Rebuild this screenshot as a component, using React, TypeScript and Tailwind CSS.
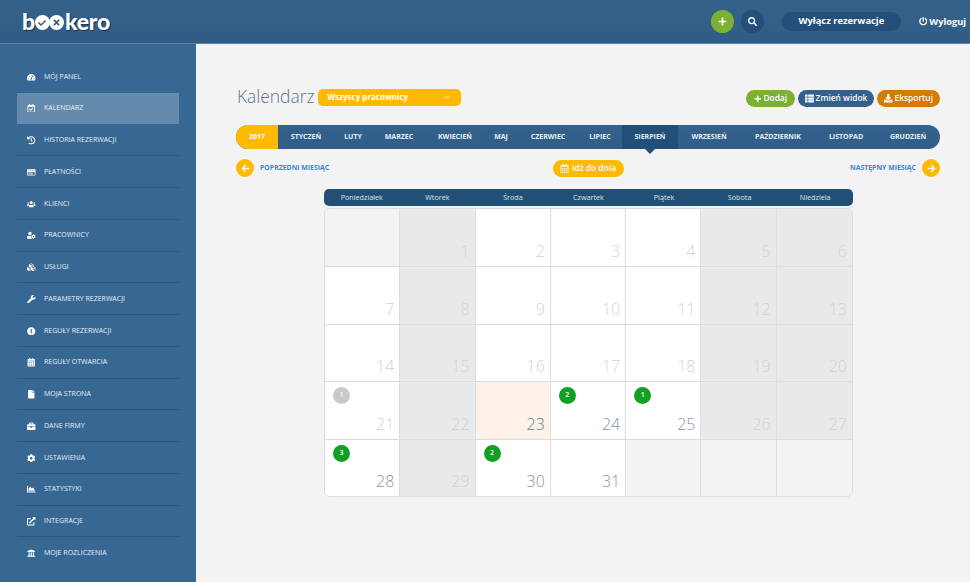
import React from "react";
import {
  FaTachometerAlt, FaRegCalendarCheck, FaHistory, FaRegCreditCard, FaUsers, FaUserCog, FaCubes, FaWrench,
  FaExclamationCircle, FaCalendarAlt, FaFile, FaBriefcase, FaCog, FaChartArea, FaExternalLinkAlt, FaUniversity,
  FaPlus, FaSearch, FaPowerOff, FaThList, FaDownload, FaArrowLeft, FaArrowRight, FaRegCalendarAlt, FaCheck, FaTimes,
} from "react-icons/fa";
import { FiChevronDown } from "react-icons/fi";

const nav: [string, React.ComponentType<{ className?: string }>][] = [
  ["MÓJ PANEL", FaTachometerAlt],
  ["KALENDARZ", FaRegCalendarCheck],
  ["HISTORIA REZERWACJI", FaHistory],
  ["PŁATNOŚCI", FaRegCreditCard],
  ["KLIENCI", FaUsers],
  ["PRACOWNICY", FaUserCog],
  ["USŁUGI", FaCubes],
  ["PARAMETRY REZERWACJI", FaWrench],
  ["REGUŁY REZERWACJI", FaExclamationCircle],
  ["REGUŁY OTWARCIA", FaCalendarAlt],
  ["MOJA STRONA", FaFile],
  ["DANE FIRMY", FaBriefcase],
  ["USTAWIENIA", FaCog],
  ["STATYSTYKI", FaChartArea],
  ["INTEGRACJE", FaExternalLinkAlt],
  ["MOJE ROZLICZENIA", FaUniversity],
];

const months: [string, string][] = [
  ["STYCZEŃ", "w-[56px]"],
  ["LUTY", "w-[38px]"],
  ["MARZEC", "w-[54px]"],
  ["KWIECIEŃ", "w-[58px]"],
  ["MAJ", "w-[34px]"],
  ["CZERWIEC", "w-[60px]"],
  ["LIPIEC", "w-[44px]"],
  ["SIERPIEŃ", "w-[56px]"],
  ["WRZESIEŃ", "w-[62px]"],
  ["PAŹDZIERNIK", "w-[76px]"],
  ["LISTOPAD", "w-[60px]"],
  ["GRUDZIEŃ", "w-[64px]"],
];
const days = ["Poniedziałek", "Wtorek", "Środa", "Czwartek", "Piątek", "Sobota", "Niedziela"];

type Cell = { n?: number; kind: "empty" | "off" | "open" | "today"; badge?: number; grey?: boolean; strong?: boolean };

const cells: Cell[] = [
  { kind: "empty" }, { n: 1, kind: "off" }, { n: 2, kind: "open" }, { n: 3, kind: "open" }, { n: 4, kind: "open" }, { n: 5, kind: "off" }, { n: 6, kind: "off" },
  { n: 7, kind: "open" }, { n: 8, kind: "off" }, { n: 9, kind: "open" }, { n: 10, kind: "open" }, { n: 11, kind: "open" }, { n: 12, kind: "off" }, { n: 13, kind: "off" },
  { n: 14, kind: "open" }, { n: 15, kind: "off" }, { n: 16, kind: "open" }, { n: 17, kind: "open" }, { n: 18, kind: "open" }, { n: 19, kind: "off" }, { n: 20, kind: "off" },
  { n: 21, kind: "open", badge: 1, grey: true }, { n: 22, kind: "off" }, { n: 23, kind: "today", strong: true }, { n: 24, kind: "open", badge: 2, strong: true }, { n: 25, kind: "open", badge: 1, strong: true }, { n: 26, kind: "off" }, { n: 27, kind: "off" },
  { n: 28, kind: "open", badge: 3, strong: true }, { n: 29, kind: "off" }, { n: 30, kind: "open", badge: 2, strong: true }, { n: 31, kind: "open", strong: true }, { kind: "empty" }, { kind: "empty" }, { kind: "empty" },
];

const cellBg = { empty: "bg-[#f3f3f3]", off: "bg-[#e9e9e9]", open: "bg-white", today: "bg-[#fdf1e8]" };

function Logo() {
  return (
    <div className="flex items-center text-[23px] leading-none font-black text-white tracking-[-0.2px] [text-shadow:1px_1px_1px_rgba(0,0,0,0.45)] font-['Lato','Open_Sans',sans-serif]">
      <span>b</span>
      <span className="mt-[2px] flex h-[15px] w-[15px] items-center justify-center rounded-full bg-white">
        <FaCheck className="text-[8px] text-[#34618c]" />
      </span>
      <span className="mt-[2px] -ml-[1px] mr-[1px] flex h-[15px] w-[15px] items-center justify-center rounded-full bg-white">
        <FaTimes className="text-[9px] text-[#34618c]" />
      </span>
      <span>kero</span>
    </div>
  );
}

export default function App() {
  return (
    <div className="flex h-[582px] w-[970px] flex-col overflow-hidden bg-[#f3f3f3] font-['Open_Sans',sans-serif]">
      <header className="flex h-[44px] shrink-0 items-center border-b border-[#5d83a6] bg-gradient-to-b from-[#346189] to-[#315c86] pl-[22px] pr-[4px]">
        <Logo />
        <div className="ml-auto flex items-center">
          <span className="flex h-[23px] w-[23px] items-center justify-center rounded-full bg-[#7cb032] text-[9px] text-white">
            <FaPlus />
          </span>
          <span className="ml-[7px] flex h-[23px] w-[23px] items-center justify-center rounded-full bg-[#234f78] text-[9px] text-white">
            <FaSearch />
          </span>
          <span className="ml-[18px] flex h-[19px] w-[119px] items-center justify-center rounded-full bg-[#234f78] text-[9.4px] font-bold text-white">
            Wyłącz rezerwacje
          </span>
          <span className="ml-[18px] flex items-center gap-[2px] text-[9.2px] font-bold text-white">
            <FaPowerOff className="text-[8.5px]" />
            Wyloguj
          </span>
        </div>
      </header>
      <div className="flex min-h-0 flex-1">
        <aside className="w-[196px] shrink-0 bg-[#376894] px-[17px] pt-[17px]">
          {nav.map(([label, Icon], i) => {
            const active = i === 1;
            const noLine = i === 0 || i === 1 || i === nav.length - 1;
            return (
              <div
                key={label}
                className={`flex items-center border-b pt-[1px] ${active ? "mb-[1px] h-[30.75px] bg-[#648bae]" : "h-[31.75px]"} ${noLine ? "border-transparent" : "border-[#2c5880]"}`}
              >
                <span className="flex w-[27px] shrink-0 justify-center pl-[2px]">
                  <Icon className="text-[8.5px] text-white" />
                </span>
                <span className="text-[7px] font-medium text-[#e6edf3]">{label}</span>
              </div>
            );
          })}
        </aside>
        <main className="min-w-0 flex-1 pl-[40px] pr-[30px] pt-[44px]">
          <div className="flex h-[18px] items-center">
            <h1 className="pl-[1px] text-[17.4px] leading-none font-light text-[#5f7391]">Kalendarz</h1>
            <div className="ml-[4px] flex h-[17px] w-[143px] items-center justify-between rounded-[5px] bg-[#ffb900] pl-[9px] pr-[9px] text-[8px] font-bold text-white">
              Wszyscy pracownicy
              <FiChevronDown className="text-[10px]" />
            </div>
            <div className="ml-auto mt-[3px] flex items-center gap-[3px] text-[8.4px] font-semibold text-white">
              <span className="flex h-[17px] w-[49px] items-center justify-center gap-[2px] rounded-full bg-[#7cb032]"><FaPlus className="text-[7.5px]" />Dodaj</span>
              <span className="flex h-[17px] w-[76px] items-center justify-center gap-[2px] rounded-full bg-[#33608c]"><FaThList className="text-[9px]" />Zmień widok</span>
              <span className="flex h-[17px] w-[63px] items-center justify-center gap-[2px] rounded-full bg-[#d67a00]"><FaDownload className="text-[8.5px]" />Eksportuj</span>
            </div>
          </div>
          <nav className="mt-[19px] flex h-[24px] overflow-hidden rounded-full bg-gradient-to-b from-[#34628c] to-[#315d87] text-[7px] font-bold text-[#e6edf3]">
            <span className="flex w-[42px] shrink-0 items-center justify-center bg-[#ffb900] text-white">2017</span>
            {months.map(([m, w]) => (
              <span key={m} className={`flex shrink-0 items-center justify-center ${w} ${m === "SIERPIEŃ" ? "bg-[#214f78]" : ""}`}>{m}</span>
            ))}
          </nav>
          <div className="relative h-0">
            <span className="absolute left-[409px] top-0 h-0 w-0 border-x-[5px] border-t-[5px] border-x-transparent border-t-[#214f78]" />
          </div>
          <div className="mt-[10px] flex h-[18px] items-center justify-between text-[6.9px] font-bold text-[#3c86d6]">
            <div className="flex w-[200px] items-center gap-[6px]">
              <span className="flex h-[18px] w-[18px] items-center justify-center rounded-full bg-[#ffb900] text-[9px] text-white"><FaArrowLeft /></span>
              POPRZEDNI MIESIĄC
            </div>
            <span className="flex h-[17px] w-[71px] items-center justify-center gap-[3px] rounded-full bg-[#ffb900] text-[8.4px] font-semibold text-white">
              <FaRegCalendarAlt className="text-[9px]" />Idź do dnia
            </span>
            <div className="flex w-[200px] items-center justify-end gap-[6px]">
              NASTĘPNY MIESIĄC
              <span className="flex h-[18px] w-[18px] items-center justify-center rounded-full bg-[#ffb900] text-[9px] text-white"><FaArrowRight /></span>
            </div>
          </div>
          <div className="ml-[88px] mt-[12px] w-[529px]">
            <div className="grid h-[17px] grid-cols-7 items-center rounded-[5px] bg-[#214f75] text-center text-[7.2px] text-[#dbe5ee]">
              {days.map((d) => <span key={d}>{d}</span>)}
            </div>
            <div className="mt-[2px] grid grid-cols-7 grid-rows-[58px_58px_57px_58px_56px] overflow-hidden rounded-[6px] border border-[#dddddd]">
              {cells.map((c, i) => (
                <div
                  key={i}
                  className={`relative border-[#dddddd] ${cellBg[c.kind]} ${i % 7 !== 6 ? "border-r" : ""} ${i < 28 ? "border-b" : ""}`}
                >
                  {c.badge !== undefined && (
                    <span className={`absolute left-[8px] top-[5px] flex h-[17px] w-[17px] items-center justify-center rounded-full text-[7px] font-semibold text-white ${c.grey ? "bg-[#c9c9c9]" : "bg-[#11a023]"}`}>
                      {c.badge}
                    </span>
                  )}
                  {c.n !== undefined && (
                    <span className={`absolute bottom-[5px] right-[5px] text-[16px] leading-[20px] font-light ${c.strong ? (c.kind === "today" ? "text-[#6c7b8f]" : "text-[#8195b0]") : "text-[#d3d3d3]"}`}>
                      {c.n}
                    </span>
                  )}
                </div>
              ))}
            </div>
          </div>
        </main>
      </div>
    </div>
  );
}
